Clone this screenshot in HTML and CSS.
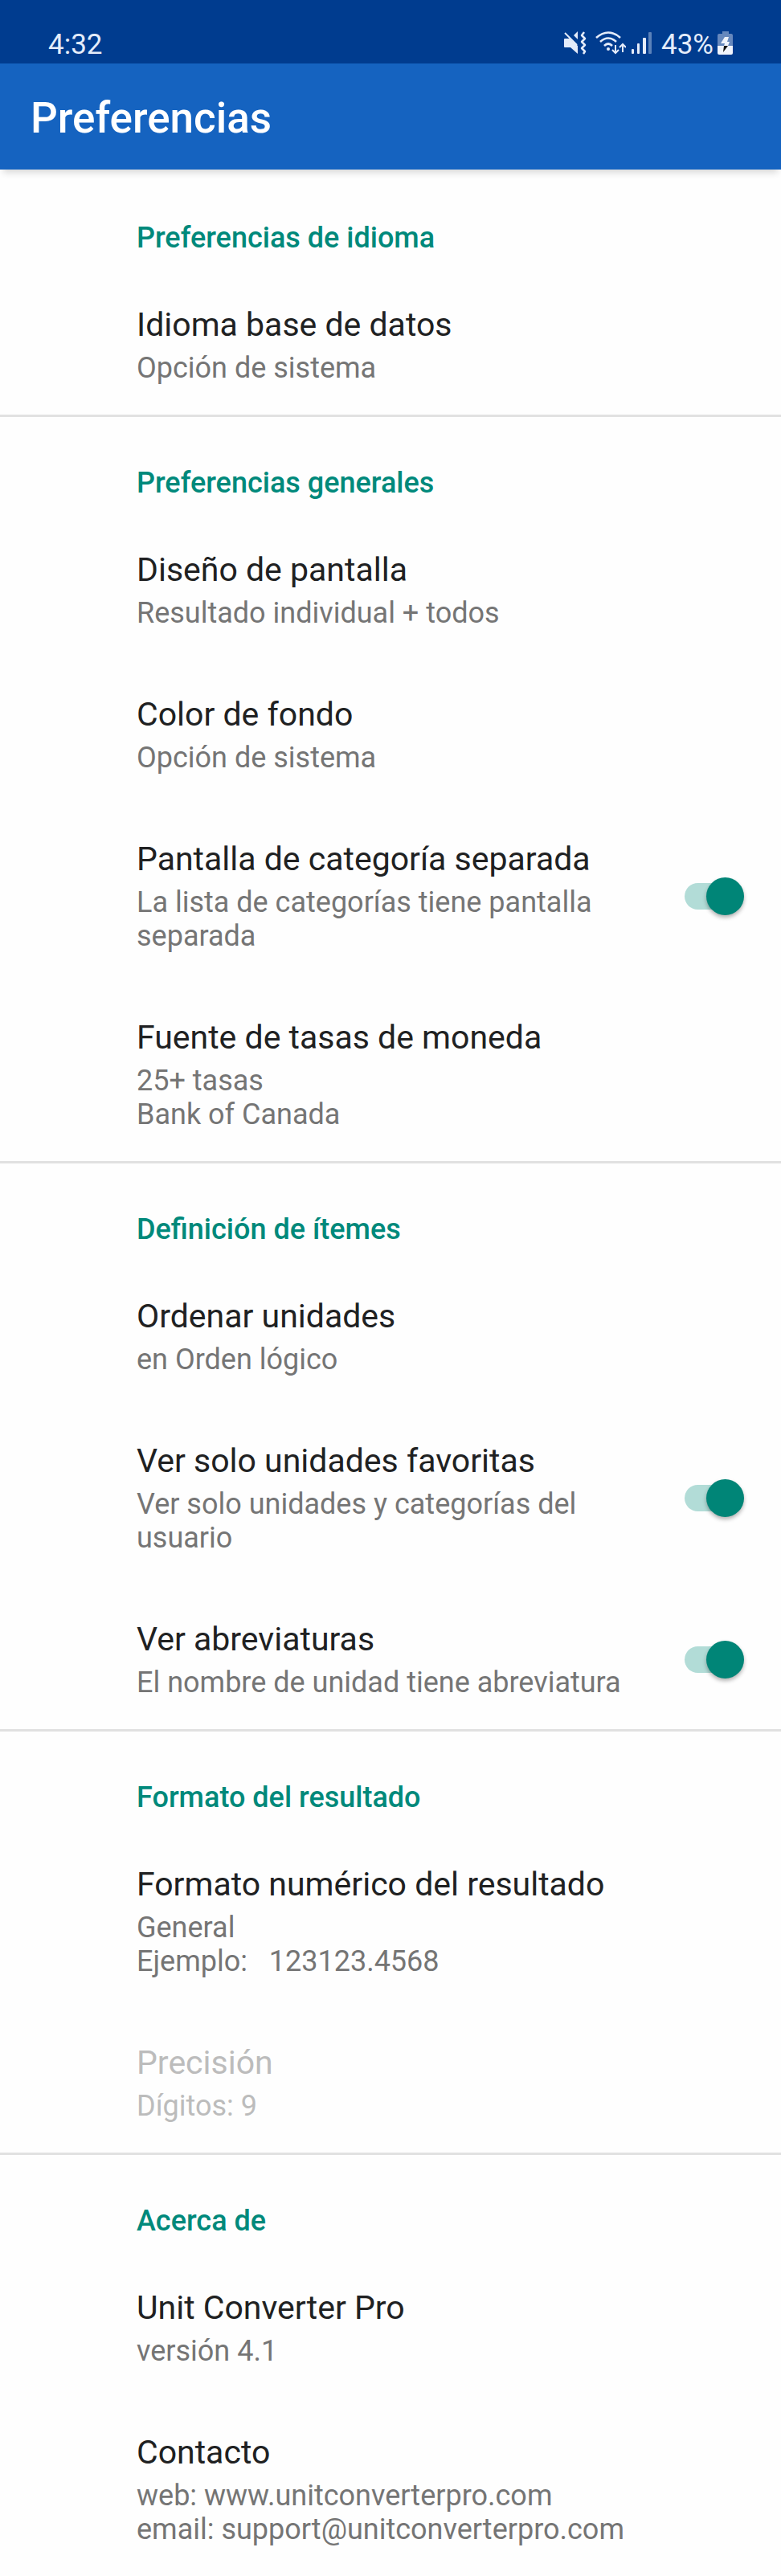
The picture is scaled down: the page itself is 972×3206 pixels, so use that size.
FILE: index.html
```html
<!DOCTYPE html>
<html lang="es">
<head>
  <meta charset="UTF-8" />
  <meta name="viewport" content="width=device-width, initial-scale=1.0" />
  <title>Preferencias</title>
  <link rel="stylesheet" href="styles.css">
</head>
<body>
  <!-- STATUS BAR -->
  <div class="status-bar">
    <span>4:32</span>
    <div class="status-icons">
      <!-- Vibrate -->
      <svg width="30" height="30" viewBox="0 0 30 30" fill="#e4ecfa" aria-hidden="true">
        <path d="M2 9h6l10 9v10l-9-8H2q-1 0-1-1v-9q0-1 1-1z"/>
        <path d="M13 5l5-5v10z"/>
        <path d="M2 2l15 15" stroke="#e4ecfa" stroke-width="2"/>
        <path d="M26 1l-3 4 4 4-4 4 4 4-4 4 4 4-2 3" fill="none" stroke="#e4ecfa" stroke-width="2.5" stroke-linejoin="round"/>
      </svg>
      <!-- Wifi -->
      <svg class="wifi" width="38" height="30" viewBox="0 0 38 30" fill="none" stroke="#e4ecfa" stroke-width="2.6" aria-hidden="true">
        <path d="M1 8Q16-5 31 8M6 13q10-9 20 0M11 18q5-5 10 0"/>
        <circle cx="16" cy="22" r="2" fill="#e4ecfa" stroke="none"/>
        <path d="M25 17v9M21 23l4 4 4-4M34 26v-9M30 20l4-4 4 4" stroke-width="2"/>
      </svg>
      <!-- Signal -->
      <svg class="signal" width="26" height="30" viewBox="0 0 26 30" fill="#e4ecfa" aria-hidden="true">
        <rect x="0" y="22" width="3" height="6" rx="1"/>
        <rect x="7" y="15" width="3" height="13" rx="1"/>
        <rect x="14" y="8" width="4" height="20" rx="1"/>
        <rect x="21" y="1" width="4" height="27" rx="1" opacity=".4"/>
      </svg>
      <span>43%</span>
      <!-- Battery -->
      <svg class="battery" width="20" height="30" viewBox="0 0 20 30" aria-hidden="true">
        <path d="M6 0h8v3h3q2 0 2 2v13H0V5q0-2 2-2h4z" fill="#6688bd"/>
        <path d="M0 18h19v9q0 2-2 2H2q-2 0-2-2z" fill="#f0f4fc"/>
        <path d="M9 7h5l-2 6h3l-2 5H8l1-3H4z" fill="#f0f4fc"/>
        <path d="M8 18h5L7 26z" fill="#111"/>
      </svg>
    </div>
  </div>

  <!-- APP BAR -->
  <header class="app-bar">
    <h1>Preferencias</h1>
  </header>

  <main class="preferences">
    <!-- Idioma -->
    <section class="pref-section">
      <h2>Preferencias de idioma</h2>
      <button type="button" class="pref">
        <span class="pref-title">Idioma base de datos</span>
        <span class="pref-summary">Opción de sistema</span>
      </button>
    </section>

    <!-- Generales -->
    <section class="pref-section">
      <h2>Preferencias generales</h2>
      <button type="button" class="pref">
        <span class="pref-title">Diseño de pantalla</span>
        <span class="pref-summary">Resultado individual + todos</span>
      </button>
      <button type="button" class="pref">
        <span class="pref-title">Color de fondo</span>
        <span class="pref-summary">Opción de sistema</span>
      </button>
      <label class="pref pref-switch" for="separateScreen">
        <span class="pref-text">
          <span class="pref-title">Pantalla de categoría separada</span>
          <span class="pref-summary">La lista de categorías tiene pantalla separada</span>
        </span>
        <input id="separateScreen" name="separateScreen" type="checkbox" role="switch" class="switch" checked />
      </label>
      <button type="button" class="pref">
        <span class="pref-title">Fuente de tasas de moneda</span>
        <span class="pref-summary">25+ tasas<br>Bank of Canada</span>
      </button>
    </section>

    <!-- Ítemes -->
    <section class="pref-section">
      <h2>Definición de ítemes</h2>
      <button type="button" class="pref">
        <span class="pref-title">Ordenar unidades</span>
        <span class="pref-summary">en Orden lógico</span>
      </button>
      <label class="pref pref-switch" for="favorites">
        <span class="pref-text">
          <span class="pref-title">Ver solo unidades favoritas</span>
          <span class="pref-summary">Ver solo unidades y categorías del usuario</span>
        </span>
        <input id="favorites" name="favorites" type="checkbox" role="switch" class="switch" checked />
      </label>
      <label class="pref pref-switch" for="abbreviations">
        <span class="pref-text">
          <span class="pref-title">Ver abreviaturas</span>
          <span class="pref-summary">El nombre de unidad tiene abreviatura</span>
        </span>
        <input id="abbreviations" name="abbreviations" type="checkbox" role="switch" class="switch" checked />
      </label>
    </section>

    <!-- Resultado -->
    <section class="pref-section">
      <h2>Formato del resultado</h2>
      <button type="button" class="pref">
        <span class="pref-title">Formato numérico del resultado</span>
        <span class="pref-summary">General<br>Ejemplo: &nbsp; 123123.4568</span>
      </button>
      <button type="button" class="pref" disabled>
        <span class="pref-title">Precisión</span>
        <span class="pref-summary">Dígitos: 9</span>
      </button>
    </section>

    <!-- Acerca de -->
    <section class="pref-section">
      <h2>Acerca de</h2>
      <button type="button" class="pref">
        <span class="pref-title">Unit Converter Pro</span>
        <span class="pref-summary">versión 4.1</span>
      </button>
      <button type="button" class="pref">
        <span class="pref-title">Contacto</span>
        <span class="pref-summary">web: www.unitconverterpro.com<br>email: support@unitconverterpro.com</span>
      </button>
    </section>
  </main>
</body>
</html>
```
FILE: styles.css
```css
/* GLOBAL */
* { box-sizing:border-box; }
body { font-family:Roboto, sans-serif; margin:0; background:#fefefe; color:#202122; }

/* STATUS BAR */
.status-bar { display:flex; justify-content:space-between; align-items:flex-end; height:79px; padding:0 59px 2px 60px;
  background:#003c8f; color:#e4ecfa; font-size:35px; line-height:42px; }
.status-icons { display:flex; align-items:center; }
.status-icons svg { margin-bottom:4px; }
.status-icons .wifi { margin-left:10px; }
.status-icons .signal { margin-left:7px; margin-right:11px; }
.status-icons .battery { margin-left:5px; }

/* APP BAR */
.app-bar { display:flex; align-items:center; height:132px; padding:4px 38px 0; background:#1563c0; color:#fff;
  box-shadow:0 8px 8px -4px rgba(0,0,0,0.15); }
.app-bar h1 { margin:0; font-size:53px; line-height:60px; font-weight:500; }

/* PREFERENCES */
.preferences { padding-top:3px; }
.pref-section + .pref-section { border-top:3px solid #e1e1e1; }
.pref-section h2 { margin:0; padding:61px 43px 19px 170px; color:#00897b; font-size:36px; line-height:42px; font-weight:500; }
.pref { display:block; width:100%; padding:43px 43px 37px 170px; border:none; background:none;
  font-family:inherit; text-align:left; color:#202122; cursor:pointer; }
.pref-title { display:block; font-size:41px; line-height:50px; }
.pref-summary { display:block; margin-top:8px; font-size:36px; line-height:42px; color:#757575; }
.pref:disabled, .pref:disabled .pref-summary { color:#bcbcbc; cursor:default; }

/* SWITCH */
.pref-switch { display:flex; }
.pref-text { flex:1; margin-right:32px; }
.switch { appearance:none; align-self:center; flex:none; display:flex; align-items:center; width:71px; height:33px; margin:0 6px 0 0;
  border-radius:17px; background:#b2dcd7; cursor:pointer; }
.switch::before { content:""; flex:none; width:47px; height:47px; border-radius:50%; background:#fafafa; box-shadow:0 3px 5px rgba(0,0,0,0.3); }
.switch:checked::before { margin-left:27px; background:#008577; }
.switch:not(:checked) { background:#b9b9b9; }
```
